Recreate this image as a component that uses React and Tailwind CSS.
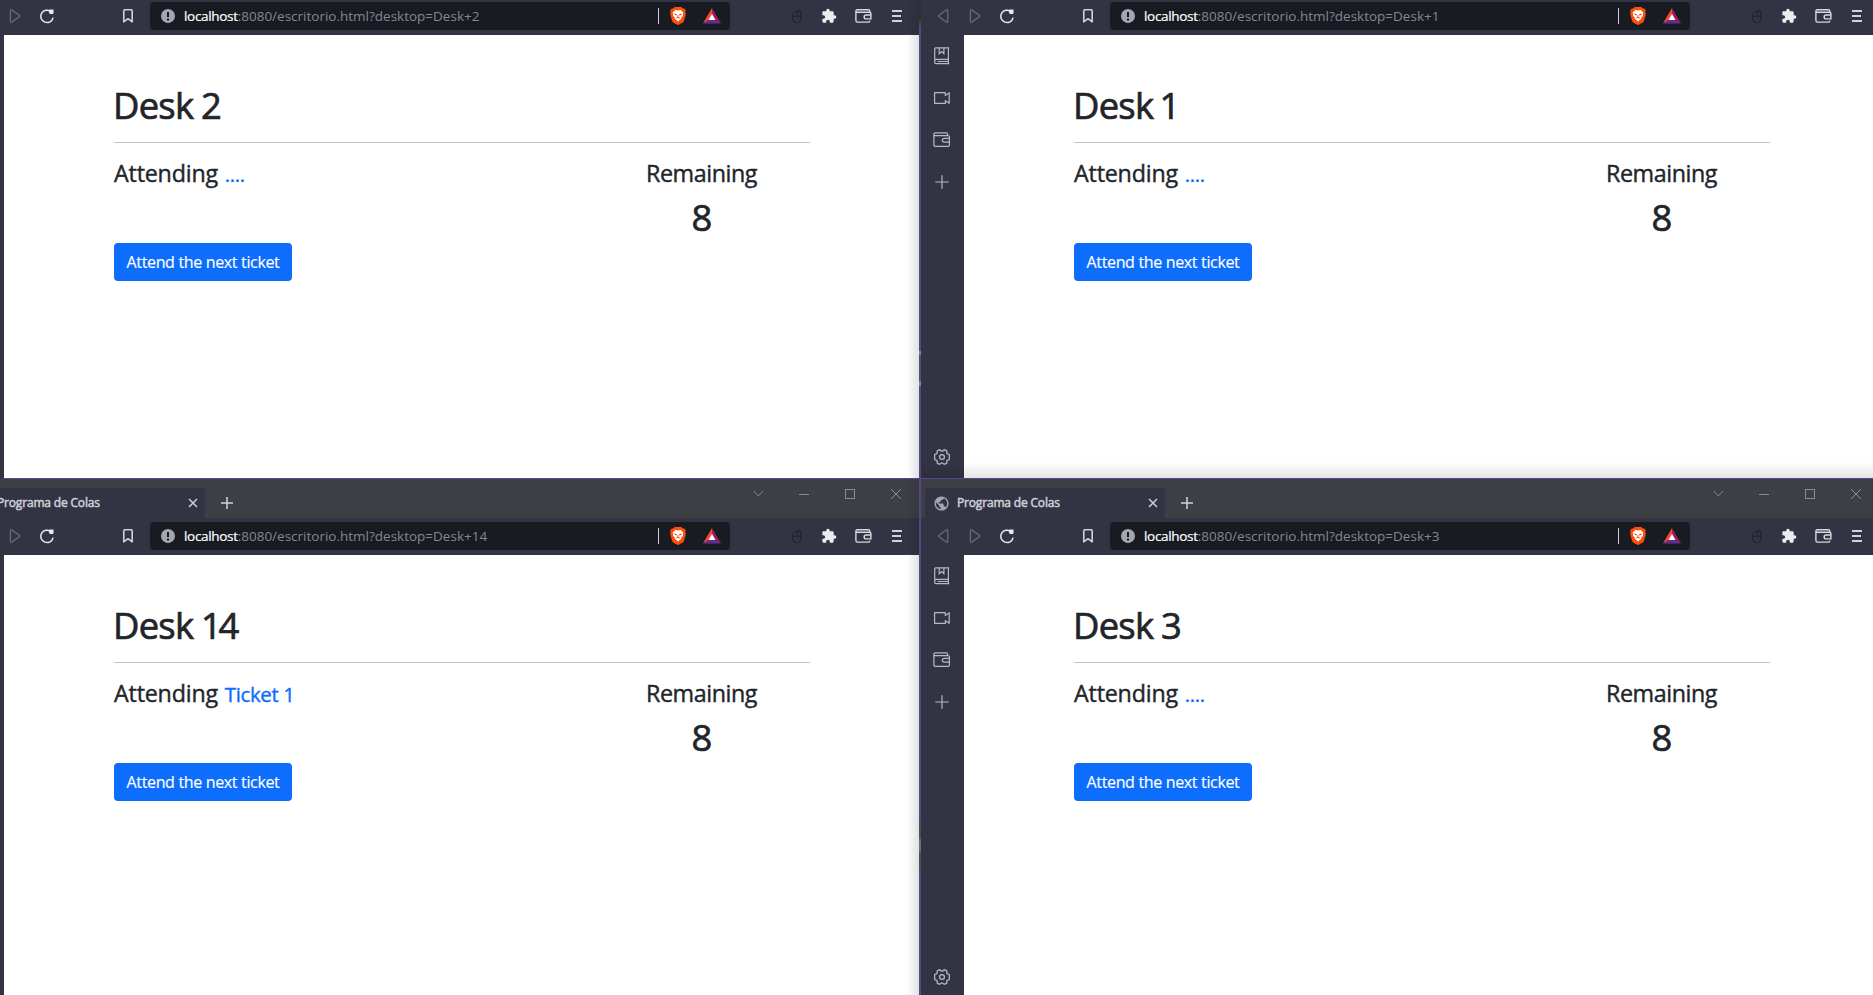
import React from 'react';
import { MdExtension, MdPublic } from 'react-icons/md';

const Svg = ({ w, h, children, className = '' }) => (
  <svg width={w} height={h} viewBox={`0 0 ${w} ${h}`} fill="none" className={`shrink-0 ${className}`}>
    {children}
  </svg>
);

const Forward = () => (
  <Svg w={16} h={16}>
    <path d="M3.5 2.6v10.8c0 1 .8 1.1 1.4.7l7.4-5.4c.5-.4.5-1 0-1.4L4.9 1.9c-.6-.4-1.4-.3-1.4.7Z" stroke="#6b6d79" strokeWidth="1.2" />
  </Svg>
);

const Back = () => (
  <Svg w={16} h={16}>
    <path d="M12.8 2.6v10.8c0 1-.8 1.1-1.4.7L4 8.7c-.5-.4-.5-1 0-1.4l7.4-5.4c.6-.4 1.4-.3 1.4.7Z" stroke="#6b6d79" strokeWidth="1.2" />
  </Svg>
);

const Reload = () => (
  <Svg w={16} h={16}>
    <path d="M12 3.6A6.2 6.2 0 1 0 14.1 9.6" stroke="#e9e9ec" strokeWidth="1.5" />
    <path d="M10.2 1.6h4.3v3.6c0 .5-.3.8-.8.8h-1.2a2.6 2.6 0 0 1-2.6-2.6Z" fill="#e9e9ec" />
  </Svg>
);

const Bookmark = () => (
  <Svg w={12} h={16}>
    <path d="M1.8 2.700c0-.6.4-1 1-1h6.400c.6 0 1 .4 1 1v11.100L6 10.700l-4.200 3.100Z" stroke="#d2d3d8" strokeWidth="1.600" strokeLinejoin="round" />
  </Svg>
);

const Brave = () => (
  <Svg w={16} h={18}>
    <path d="M4.7 0h6.600l1.500 1.600 1.500-.1 1.600 2-.6 1.500.6 1.700-1.900 7.100c-.2.800-.6 1.300-1.200 1.800L9.200 17.500c-.7.600-1.700.600-2.400 0l-3.600-1.900c-.6-.5-1-1-1.200-1.800L.1 6.700l.6-1.700-.6-1.500 1.600-2 1.500.1Z" fill="#fb4f0b" />
    <path d="M5.300 3 8 3.500 10.700 3l2.600 2.700-.5 1.900.3.900-2 2.300.2 1L8 14.600l-3.300-2.800.2-1-2-2.300.3-.9-.5-1.900Z" fill="#fff" />
    <path d="m4.200 6.400 2.800.7-.6 1.500-1.600-.5Zm7.600 0L9 7.100l.6 1.500 1.600-.5Z" fill="#fb4f0b" />
    <path d="M8 8v2M6 11.200l2-1 2 1" stroke="#fb4f0b" strokeWidth="1" />
  </Svg>
);

const Bat = () => (
  <Svg w={18} h={16}>
    <path d="M9 0 0 15.500 5.500 12 9 5.800Z" fill="#ff4a24" />
    <path d="m9 0 9 15.500L12.500 12 9 5.800Z" fill="#9e1f63" />
    <path d="M0 15.500h18L12.500 12h-7Z" fill="#662d91" />
    <path d="M9 5.800 5.500 12h7Z" fill="#fff" />
  </Svg>
);

const Mouse = () => (
  <Svg w={12} h={16}>
    <rect x="1.600" y="3.500" width="8.600" height="11" rx="4.300" stroke="#1f212a" strokeWidth="1.100" />
    <path d="M1.600 8.300h8.600M5.900 3.500v4.800M5.900 3.500C5.900 1.800 7 1.400 8.400 1.900s1.700 1.600 2.200 3.400" stroke="#1f212a" strokeWidth="1" />
  </Svg>
);

const ToolWallet = () => (
  <Svg w={17} h={14}>
    <path d="M14.800 3.600V2c0-.700-.500-1.200-1.200-1.200H2.300C1.500.8.900 1.400.9 2.200v9.300c0 .900.700 1.600 1.600 1.600h11c.800 0 1.400-.600 1.400-1.400M1.300 3.200h13c1 0 1.600.600 1.600 1.500v5.200h-4.800a1.950 1.950 0 0 1 0-3.900h4.800" stroke="#d7d8dc" strokeWidth="1.400" />
  </Svg>
);

const Menu = () => (
  <Svg w={12} h={14}>
    <path d="M1 2h10M1 7h9M1 12h10" stroke="#d2d3d8" strokeWidth="2" />
  </Svg>
);

const Info = () => (
  <Svg w={14} h={14}>
    <circle cx="7" cy="7" r="7" fill="#a3a5ae" />
    <path d="M7 3v5M7 9.500v2" stroke="#181b22" strokeWidth="2" />
  </Svg>
);

const Book = () => (
  <Svg w={16} h={18}>
    <path d="M.7 1.700c0-.5.4-.9.900-.9h12.800v11.500H2.200c-.9 0-1.500.6-1.500 1.500v1.500c0 .8.500 1.300 1.300 1.300h13.300M.7 14V1.700M14.400 12v4.500M3.500 14.500h11M5.200 1v5.600l2.400-2 2.300 2V1" stroke="#b5b8c8" strokeWidth="1.200" />
  </Svg>
);

const Video = () => (
  <Svg w={18} h={14}>
    <path d="M1.600 1.700h10.700v2.700l3.900-2.600v10.500l-3.900-2.600v2.700H1.600Z" stroke="#b5b8c8" strokeWidth="1.200" strokeLinejoin="round" />
  </Svg>
);

const SideWallet = () => (
  <Svg w={18} h={16}>
    <path d="M14.500 3.600V1.900c0-.6-.4-1-1-1H2.200C1.400.9.900 1.400.9 2.100v10.900c0 .7.600 1.300 1.300 1.300h12.900c.700 0 1.300-.500 1.300-1.200V4.900c0-.700-.600-1.300-1.300-1.300H1M16.400 6.300h-5c-1.500 0-2.100.8-2.100 1.900s.6 1.900 2.100 1.900h5" stroke="#b5b8c8" strokeWidth="1.200" />
  </Svg>
);

const Plus = ({ big }) => (
  <Svg w={14} h={14}>
    <path d={big ? 'M7 .3v13.400M.3 7h13.400' : 'M7 1v12M1 7h12'} stroke={big ? '#b5b8c8' : '#d2d3d8'} strokeWidth={big ? 1.2 : 1.5} />
  </Svg>
);

const Gear = () => (
  <Svg w={16} h={16}>
    <path
      d="M4.600 1 6.100.8Q8 3.300 9.900.8l1.500.2 1.500 1Q12 5 15 5.200l.4 1.100v3.400l-.4 1.100Q12 11 12.900 14l-1.500 1-1.500.2Q8 12.700 6.100 15.200L4.600 15l-1.500-1Q4 11 1 10.800L.6 9.700V6.300L1 5.200Q4 5 3.100 2Z"
      stroke="#b5b8c8"
      strokeWidth="1.300"
      strokeLinejoin="round"
    />
    <circle cx="8" cy="8" r="2.400" stroke="#b5b8c8" strokeWidth="1.300" />
  </Svg>
);

const Slot = ({ className, children }) => (
  <div className={`flex shrink-0 items-center justify-center ${className}`}>{children}</div>
);

function TabStrip({ side }) {
  return (
    <div className="flex h-[39px] shrink-0 items-end overflow-hidden bg-[#3e3e45]">
      <div
        className={
          side
            ? 'ml-1 flex h-[30px] w-[240px] items-center rounded-t bg-[#323443] pl-2'
            : 'flex h-[30px] w-[205px] items-center rounded-tr bg-[#323443]'
        }
      >
        {side && <MdPublic className="size-[17px] shrink-0 text-[#a3a6ae]" />}
        <span
          className={`${side ? 'ml-[7px]' : '-ml-[3px]'} flex-1 whitespace-nowrap text-[12px] tracking-[-0.17px] text-[#cfd0d6] [-webkit-text-stroke:0.5px]`}
        >
          Programa de Colas
        </span>
        <Svg w={10} h={10} className="mr-[7px]">
          <path d="m1 1 8 8M9 1 1 9" stroke="#cfd0d6" strokeWidth="1.500" />
        </Svg>
      </div>
      <Slot className="h-[30px] w-[44px]"><Plus /></Slot>
      <div className={`ml-auto flex h-[39px] gap-[30px] pt-[7px] ${side ? 'mr-[9px]' : 'mr-[15px]'}`}>
        <Svg w={16} h={16}><path d="m3.500 5 4.800 4.900L13.100 5" stroke="#8d8d92" /></Svg>
        <Svg w={16} h={16}><path d="M3 8.500h10" stroke="#8d8d92" /></Svg>
        <Svg w={16} h={16}><rect x="3.500" y="3.500" width="9" height="9" stroke="#8d8d92" /></Svg>
        <Svg w={16} h={16}><path d="m3 3 10 10M13 3 3 13" stroke="#8d8d92" /></Svg>
      </div>
    </div>
  );
}

function Toolbar({ side, tabs, desk }) {
  return (
    <div className={`flex shrink-0 items-start bg-[#323443] ${tabs ? 'h-[37px] pt-1' : 'h-[35px] pt-0.5'}`}>
      {side && <Slot className="h-7 w-[39px] pl-1"><Back /></Slot>}
      <Slot className="h-7 w-[30px]"><Forward /></Slot>
      <Slot className="h-7 w-[34px]"><Reload /></Slot>
      <Slot className="ml-[42px] h-7 w-[44px]"><Bookmark /></Slot>
      <div className="flex h-7 w-[580px] shrink-0 items-center rounded bg-[#181b22] pl-[11px] pr-[9px]">
        <Info />
        <span className="ml-[9px] whitespace-nowrap pt-px text-[13.5px] text-[#85888e]">
          <span className="tracking-[-0.32px] text-white [-webkit-text-stroke:0.2px]">localhost</span>:8080/escritorio.html?desktop=Desk+{desk}
        </span>
        <span className="ml-auto h-4 w-px bg-[#cfd0d6]" />
        <span className="ml-[11px]"><Brave /></span>
        <span className="ml-[17px]"><Bat /></span>
      </div>
      <Slot className="ml-[51px] h-7 w-8"><Mouse /></Slot>
      <Slot className="h-7 w-8"><MdExtension className="size-4 text-[#ececee]" /></Slot>
      <Slot className="ml-px h-7 w-[34px]"><ToolWallet /></Slot>
      <Slot className="h-7 w-[34px]"><Menu /></Slot>
    </div>
  );
}

function SideBar({ tabs }) {
  return (
    <div className={`flex w-[43px] shrink-0 flex-col items-center bg-[#323443] pr-px ${tabs ? 'pb-[10px]' : 'pb-[13px]'}`}>
      <Slot className="h-[42px] w-full"><Book /></Slot>
      <Slot className="h-[42px] w-full"><Video /></Slot>
      <Slot className="h-[42px] w-full"><SideWallet /></Slot>
      <Slot className="h-[42px] w-full"><Plus big /></Slot>
      <div className="mt-auto"><Gear /></div>
    </div>
  );
}

function DeskPage({ desk, ticket }) {
  return (
    <main className="min-w-0 flex-1 bg-white pl-[110px] pt-[48px] text-[#212529]">
      <div className="w-[696px]">
        <h1 className="-ml-px h-[59px] whitespace-nowrap text-[36.4px] leading-[44px] tracking-[-0.75px] [-webkit-text-stroke:0.7px]">
          Desk <span className={desk.length > 1 ? '-ml-px tracking-[-3.2px]' : desk === '1' ? '-ml-[2.5px]' : '-ml-px'}>{desk}</span>
        </h1>
        <hr className="border-t border-[#c4c5c6]" />
        <div className="flex justify-between pt-[17px]">
          <div>
            <h4 className="h-7 whitespace-nowrap text-[23.3px] leading-[27px] tracking-[-0.2px] [-webkit-text-stroke:0.4px]">
              Attending <small className="ml-px text-[20.4px] tracking-[-0.35px] text-[#0d6efd]">{ticket}</small>
            </h4>
            <button className="mt-[55px] h-[38px] w-[178px] whitespace-nowrap rounded bg-[#0d6efd] pb-px text-[16px] tracking-[-0.34px] text-white [-webkit-text-stroke:0.15px]">
              Attend the next ticket
            </button>
          </div>
          <div className="-mr-3 w-[240px] text-center">
            <h4 className="h-7 pr-px text-[23.3px] leading-[27px] tracking-[-0.45px] [-webkit-text-stroke:0.4px]">Remaining</h4>
            <h1 className="mt-[7px] text-[36.4px] leading-[44px] [-webkit-text-stroke:0.7px]">8</h1>
          </div>
        </div>
      </div>
    </main>
  );
}

function BrowserWindow({ side, tabs, desk, ticket = '....' }) {
  return (
    <section className={`relative flex h-full min-w-0 flex-col overflow-hidden bg-white ${side ? 'flex-1' : 'w-[919px] shrink-0'}`}>
      {tabs && <TabStrip side={side} />}
      <Toolbar side={side} tabs={tabs} desk={desk} />
      <div className="flex min-h-0 flex-1">
        {side ? <SideBar tabs={tabs} /> : <div className="w-1 shrink-0 bg-[#323443]" />}
        <DeskPage desk={desk} ticket={ticket} />
      </div>
      {!side && <div className="absolute inset-y-0 right-0 w-3 bg-gradient-to-l from-black/12 to-transparent" />}
      {side && !tabs && <div className="absolute inset-x-0 bottom-0 h-4 bg-gradient-to-t from-black/10 to-transparent" />}
    </section>
  );
}

export default function App() {
  return (
    <div
      className="flex h-[995px] w-[1873px] flex-col overflow-hidden bg-white"
      style={{ fontFamily: '"Open Sans", "Noto Sans", sans-serif' }}
    >
      <div className="flex h-[478px] shrink-0">
        <BrowserWindow desk="2" />
        <div className="flex w-0.5 shrink-0 flex-col bg-[#514a86]">
          <div className="h-[21px] bg-[#303137]" />
          <div className="h-[5px] bg-[#45454c]" />
          <div className="mt-[325px] h-1 bg-[#858781]" />
          <div className="mt-[26px] h-[5px] bg-[#858781]" />
        </div>
        <BrowserWindow side desk="1" />
      </div>
      <div className="h-px shrink-0 bg-[#323443] pl-[3px]">
        <div className="h-px bg-[#544893]" />
      </div>
      <div className="flex h-[516px] shrink-0">
        <BrowserWindow tabs desk="14" ticket="Ticket 1" />
        <div className="flex w-0.5 shrink-0 flex-col bg-[#514a86]">
          <div className="mt-[341px] h-[19px] bg-[#485153]" />
          <div className="h-[13px] bg-[#6d7269]" />
          <div className="h-4 bg-[#485153]" />
        </div>
        <BrowserWindow side tabs desk="3" />
      </div>
    </div>
  );
}
